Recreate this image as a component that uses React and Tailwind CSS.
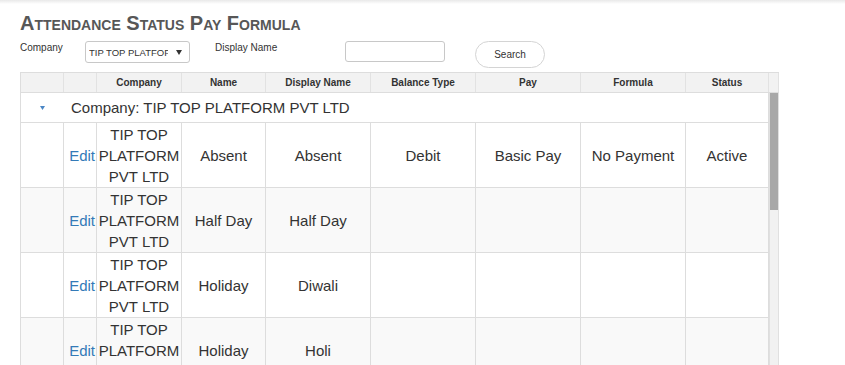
const cols = 'grid-cols-[43px_33px_85px_84px_105px_105px_105px_105px_83px]';

const headers = ['', '', 'Company', 'Name', 'Display Name', 'Balance Type', 'Pay', 'Formula', 'Status'];

const rows = [
  { name: 'Absent', display: 'Absent', balance: 'Debit', pay: 'Basic Pay', formula: 'No Payment', status: 'Active' },
  { name: 'Half Day', display: 'Half Day', balance: '', pay: '', formula: '', status: '' },
  { name: 'Holiday', display: 'Diwali', balance: '', pay: '', formula: '', status: '' },
  { name: 'Holiday', display: 'Holi', balance: '', pay: '', formula: '', status: '' },
];

function Cell({ children, className = '' }) {
  return (
    <div className={`flex items-center justify-center border-r border-[#ddd] text-center ${className}`}>
      {children}
    </div>
  );
}

export default function App() {
  return (
    <div className="w-[845px] h-[365px] overflow-hidden bg-white font-['Liberation_Sans',Arial,sans-serif] text-[#333]">
      <div className="h-[4px] bg-gradient-to-b from-[#e9e9e9] to-white" />
      <div className="pl-[20px]">
        {/* Title */}
        <h1 className="mt-[9px] text-[20px] leading-[20px] font-bold text-[#575757] [font-variant:small-caps]">
          Attendance Status Pay Formula
        </h1>

        {/* Filters */}
        <div className="mt-[8px] flex items-start h-[27px]">
          <span className="w-[65px] pt-[1px] text-[10px] leading-[12px]">Company</span>
          <div className="flex items-center w-[105px] h-[22px] border border-[#c8c8c8] rounded-[3px] pl-[3px] pr-[7px]">
            <span className="flex-1 overflow-hidden whitespace-nowrap text-[9.5px] leading-[12px] pt-[1px]">TIP TOP PLATFOF</span>
            <svg width="6" height="5" viewBox="0 0 6 5" className="ml-[8px] shrink-0">
              <path d="M0 0h6L3 5z" fill="#333" />
            </svg>
          </div>
          <span className="w-[155px] pl-[25px] pt-[1px] text-[10px] leading-[12px]">Display Name</span>
          <input className="w-[100px] h-[21px] border border-[#c8c8c8] rounded-[3px] outline-none" />
          <button className="ml-[30px] w-[70px] h-[27px] rounded-full border border-[#d4d4d4] bg-white text-[10px] text-[#333]">
            Search
          </button>
        </div>

        {/* Table */}
        <div className="mt-[4px] w-[759px] border-l border-t border-[#ddd]">
          <div className="flex h-[20px] bg-[#f2f2f2] border-b border-[#ddd]">
            <div className={`grid ${cols}`}>
              {headers.map((h, i) => (
                <Cell key={i} className="text-[10px] font-bold border-[#e2e2e2]">{h}</Cell>
              ))}
            </div>
            <div className="w-[11px] border-r border-[#e2e2e2]" />
          </div>

          <div className="flex h-[300px]">
            <div className="w-[748px]">
              {/* Group row */}
              <div className="flex items-center h-[30px] border-b border-r border-[#ddd]">
                <div className="w-[43px] flex justify-center pr-[1px]">
                  <svg width="5" height="4" viewBox="0 0 5 4">
                    <path d="M0 0h5L2.5 4z" fill="#4a86c5" />
                  </svg>
                </div>
                <span className="pl-[7px] text-[15px] leading-[21px]">Company: TIP TOP PLATFORM PVT LTD</span>
              </div>

              {rows.map((r, i) => (
                <div
                  key={i}
                  className={`grid ${cols} h-[65px] border-b border-[#ddd] text-[15px] leading-[21px] ${i % 2 ? 'bg-[#f9f9f9]' : 'bg-white'}`}
                >
                  <Cell />
                  <Cell className="justify-end pr-[1px]">
                    <a className="text-[#337ab7]">Edit</a>
                  </Cell>
                  <Cell className="pt-px">
                    <span>TIP TOP<br />PLATFORM<br />PVT LTD</span>
                  </Cell>
                  <Cell>{r.name}</Cell>
                  <Cell>{r.display}</Cell>
                  <Cell>{r.balance}</Cell>
                  <Cell>{r.pay}</Cell>
                  <Cell>{r.formula}</Cell>
                  <Cell>{r.status}</Cell>
                </div>
              ))}
            </div>

            {/* Scrollbar */}
            <div className="w-[11px] flex flex-col bg-[#f1f1f1] border-x border-[#e0e0e0]">
              <div className="h-[117px] bg-[#a8a8a8]" />
            </div>
          </div>
        </div>
      </div>
    </div>
  );
}
